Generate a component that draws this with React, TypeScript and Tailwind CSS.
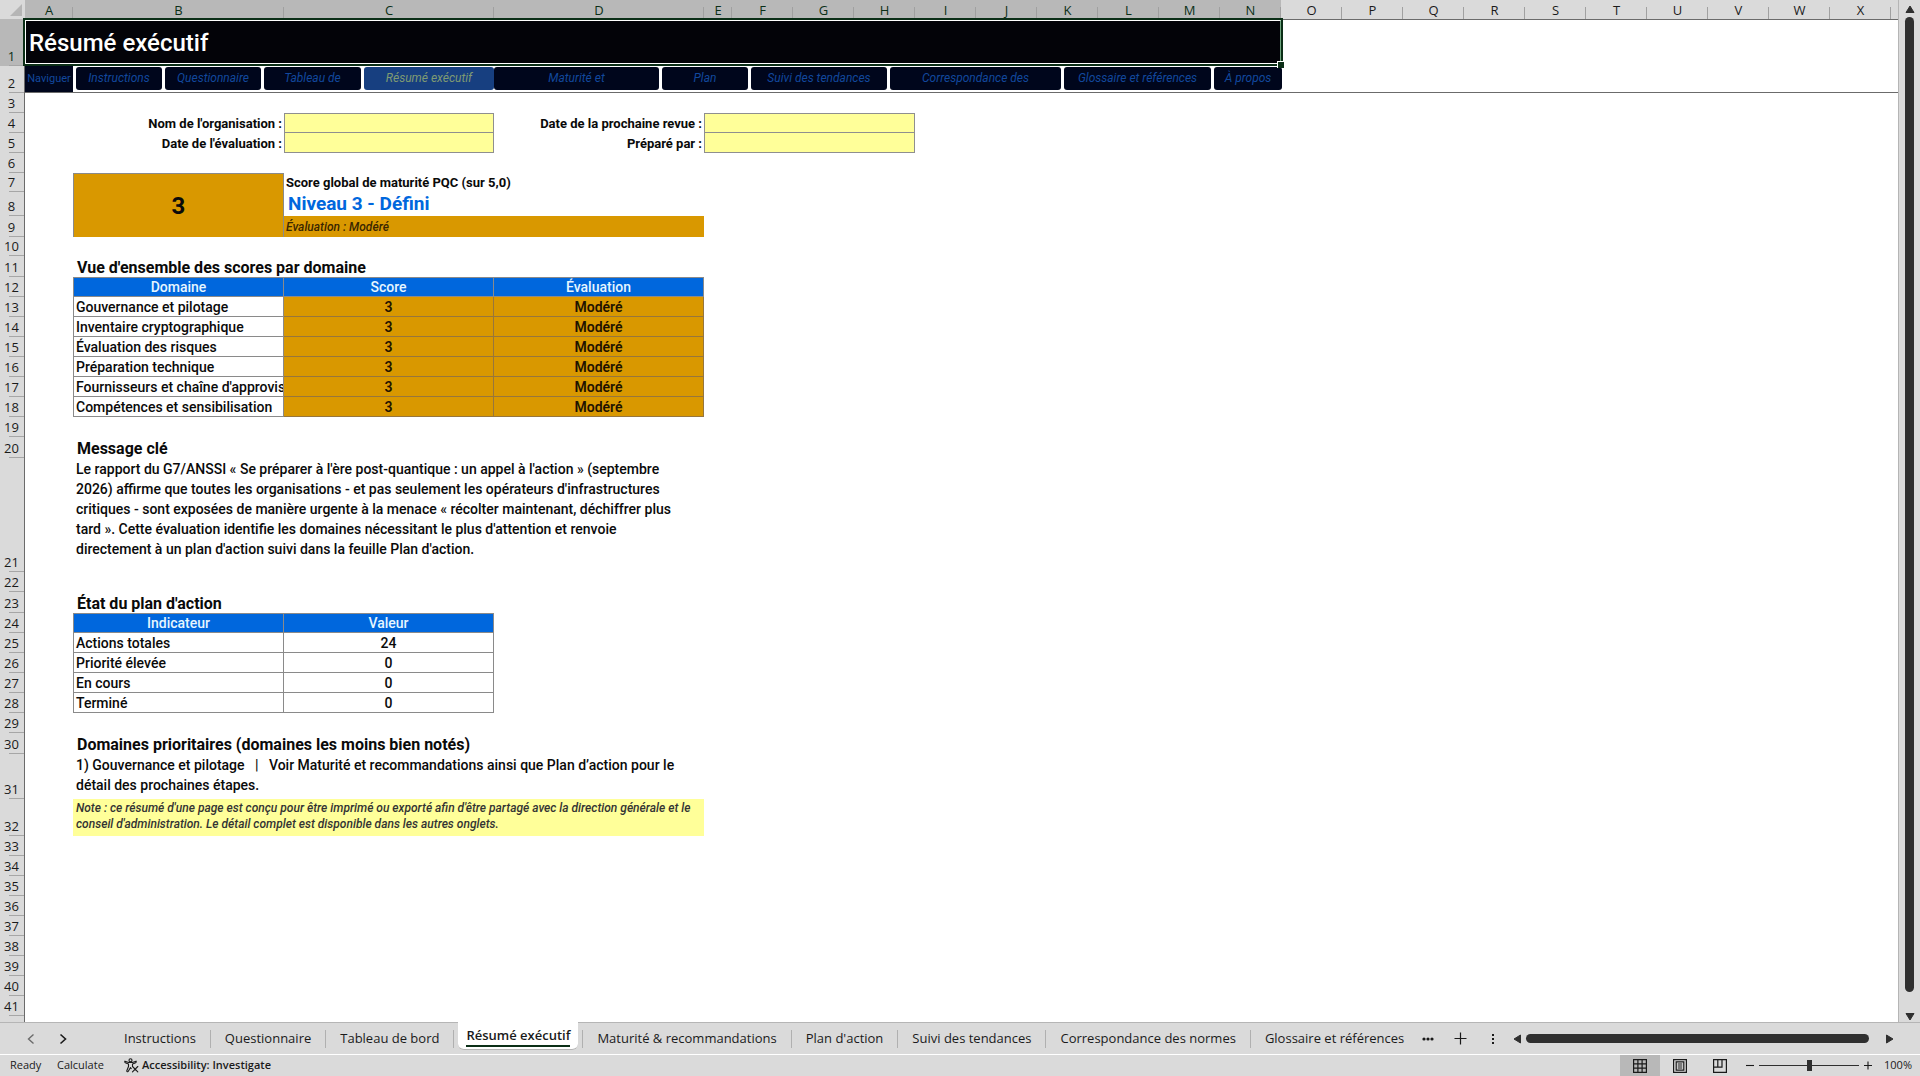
import type { ReactNode } from 'react'

const aptos = "font-['Roboto','Inter',sans-serif]"
const segoe = "font-['Open_Sans','Noto_Sans',sans-serif]"

const NARROW = 'FGHIJKLMNOPQRSTUVWX'.split('')
const LETTERS = ['A', 'B', 'C', 'D', 'E', ...NARROW]
const SELECTED = 'ABCDEFGHIJKLMN'

const NAV = [
  { label: 'Instructions', width: 'w-[86px]' },
  { label: 'Questionnaire', width: 'w-24' },
  { label: 'Tableau de', width: 'w-[97px]' },
  { label: 'Résumé exécutif', width: 'w-[130px]', active: true },
  { label: 'Maturité et', width: 'w-[165px]' },
  { label: 'Plan', width: 'w-[86px]' },
  { label: 'Suivi des tendances', width: 'w-[136px]' },
  { label: 'Correspondance des', width: 'w-[171px]' },
  { label: 'Glossaire et références', width: 'w-[147px]' },
  { label: 'À propos', width: 'w-[68px]' },
]

const DOMAINS = [
  'Gouvernance et pilotage',
  'Inventaire cryptographique',
  'Évaluation des risques',
  'Préparation technique',
  "Fournisseurs et chaîne d'approvisionnement",
  'Compétences et sensibilisation',
]

const INDICATORS = [
  { label: 'Actions totales', value: 24 },
  { label: 'Priorité élevée', value: 0 },
  { label: 'En cours', value: 0 },
  { label: 'Terminé', value: 0 },
]

const SHEETS = [
  'Instructions',
  'Questionnaire',
  'Tableau de bord',
  'Résumé exécutif',
  'Maturité & recommandations',
  "Plan d'action",
  'Suivi des tendances',
  'Correspondance des normes',
  'Glossaire et références',
]

function Row({ n, height = 'h-5', selected, children }: { n: number; height?: string; selected?: boolean; children?: ReactNode }) {
  return (
    <tr className={height}>
      <th
        scope="row"
        className={`relative border-r border-[#6b6b6b] p-0 pr-px pb-px text-center align-bottom font-normal ${segoe} text-[13px] leading-[18px] ${
          selected ? 'bg-[#b8b8b8] text-[#0b2f17]' : 'bg-[#dadada] text-[#1a1a1a]'
        }`}
      >
        {n}
        <span className="absolute right-0 bottom-0 h-px w-[15px] bg-[#a6a6a6]" />
      </th>
      {children ?? <td colSpan={25} />}
    </tr>
  )
}

function Field({ id, label, last, span }: { id: string; label: string; last?: boolean; span?: number }) {
  return (
    <>
      <td className="p-0 pt-0.5 pr-0.5 text-right text-[13px] leading-4 font-bold whitespace-nowrap">
        <label htmlFor={id}>{label}</label>
      </td>
      <td colSpan={span} className={`border-r border-b border-l border-[#8f8f8f] bg-[#ffff99] p-0 ${last ? '' : 'border-t'}`}>
        <input id={id} className="block h-[18px] w-full bg-transparent px-1 text-[13px] outline-none" />
      </td>
    </>
  )
}

function HeadCell({ children, first }: { children: ReactNode; first?: boolean }) {
  return (
    <th
      scope="col"
      className={`border-t border-r border-b border-[#8a8a8a] bg-[#0067dd] p-0 text-[14px] leading-[18px] font-medium text-[#e6f6ff] ${first ? 'border-l' : ''}`}
    >
      {children}
    </th>
  )
}

function SectionTitle({ n, children }: { n: number; children: ReactNode }) {
  return (
    <Row n={n} height="h-[21px]">
      <td />
      <td colSpan={24} className="p-0 pl-1 align-bottom">
        <h2 className="text-base leading-[19px] font-bold whitespace-nowrap">{children}</h2>
      </td>
    </Row>
  )
}

function Grid() {
  const body = 'text-[14px] leading-[18px] font-medium'
  const cell = `border-r border-b border-[#8a8a8a] p-0 pt-px ${body}`
  const amber = 'border-[#97763c] bg-[#d99800] text-center font-semibold text-[#1f1300]'
  return (
    <table className={`w-full table-fixed border-separate border-spacing-0 text-[#0a0a0a] ${aptos}`}>
      <colgroup>
        <col className="w-[25px]" />
        <col className="w-12" />
        <col className="w-[211px]" />
        <col className="w-[210px]" />
        <col className="w-[210px]" />
        <col className="w-7" />
        {NARROW.map((l) => (
          <col key={l} className="w-[61px]" />
        ))}
        <col />
      </colgroup>
      <thead>
        <tr className="h-5">
          <td className="border-b border-[#b8b8b8] bg-[#dadada] p-0">
            <svg className="mr-[3px] ml-auto block" width="12" height="12" viewBox="0 0 12 12">
              <path d="M12 0V12H0Z" fill="#b5b5b5" />
            </svg>
          </td>
          {LETTERS.map((l) => (
            <th
              key={l}
              scope="col"
              className={`relative border-b p-0 pt-px text-center font-normal ${segoe} text-[13px] leading-[18px] ${
                SELECTED.includes(l) ? 'border-[#0b2f17] bg-[#b8b8b8] text-[#0b2f17]' : 'border-[#6b6b6b] bg-[#dadada] text-[#1a1a1a]'
              }`}
            >
              {l}
              <span className="absolute right-0 bottom-0 h-3 w-px bg-[#a0a0a0]" />
            </th>
          ))}
          <td className="border-b border-[#6b6b6b] bg-[#dadada] p-0" />
        </tr>
      </thead>
      <tbody>
        <Row n={1} height="h-[46px]" selected>
          <td colSpan={14} className="relative bg-[#030308] p-0">
            <h1 className="pl-1 text-[24px] leading-8 font-medium text-white">Résumé exécutif</h1>
            {/* selection frame with its fill handle */}
            <span className="absolute -inset-x-0.5 -top-0.5 bottom-0 border-2 border-[#0b2f17]" />
            <span className="absolute inset-x-0 top-0 bottom-0.5 border border-white border-r-[#6fa57f]" />
            <span className="absolute -right-[3px] -bottom-0.5 size-[7px] border-t border-l border-white bg-[#0b2f17]" />
          </td>
          <td colSpan={11} />
        </Row>
        <Row n={2} height="h-[27px]">
          <td className="border-b border-[#6b6b6b] bg-[#00061c] p-0 text-center text-[11px] leading-4 text-[#12489c]">Naviguer</td>
          <td colSpan={24} className="border-b border-[#6b6b6b] p-0 align-top">
            <nav className="flex gap-[3px] pt-px pl-[3px]">
              {NAV.map((item) => (
                <a
                  key={item.label}
                  href="#"
                  className={`shrink-0 rounded-[3px] text-center text-[12px] leading-[23px] whitespace-nowrap italic ${item.width} ${
                    item.active ? '-mr-[3px] bg-[#173f80] text-[#7f9a73]' : 'bg-[#00061c] text-[#12489c]'
                  }`}
                >
                  {item.label}
                </a>
              ))}
            </nav>
          </td>
        </Row>
        <Row n={3} />
        <Row n={4}>
          <td />
          <Field id="org" label="Nom de l'organisation :" />
          <Field id="review" label="Date de la prochaine revue :" span={4} />
          <td colSpan={17} />
        </Row>
        <Row n={5}>
          <td />
          <Field id="date" label="Date de l'évaluation :" last />
          <Field id="author" label="Préparé par :" span={4} last />
          <td colSpan={17} />
        </Row>
        <Row n={6} />
        <Row n={7} height="h-[19px]">
          <td />
          <td rowSpan={3} className="border-t border-r border-l border-[#8a8a8a] bg-[#d99800] p-0 text-center text-[24px] leading-7 font-bold">
            3
          </td>
          <td colSpan={23} className="p-0 pl-0.5 text-[13px] leading-[18px] font-bold">
            Score global de maturité PQC (sur 5,0)
          </td>
        </Row>
        <Row n={8} height="h-6">
          <td />
          <td colSpan={23} className="p-0 pl-1 text-[19px] leading-[22px] font-bold text-[#0067dd]">
            Niveau 3 - Défini
          </td>
        </Row>
        <Row n={9} height="h-[21px]">
          <td />
          <td colSpan={2} className="bg-[#d99800] p-0 pt-px pl-0.5 text-[12px] leading-4 font-medium text-[#3a2600] italic">
            Évaluation : Modéré
          </td>
          <td colSpan={21} />
        </Row>
        <Row n={10} height="h-[19px]" />
        <SectionTitle n={11}>Vue d'ensemble des scores par domaine</SectionTitle>
        <Row n={12}>
          <td />
          <HeadCell first>Domaine</HeadCell>
          <HeadCell>Score</HeadCell>
          <HeadCell>Évaluation</HeadCell>
          <td colSpan={21} />
        </Row>
        {DOMAINS.map((domain, i) => (
          <Row key={domain} n={13 + i}>
            <td />
            <td className={`${cell} overflow-hidden border-l pl-0.5 whitespace-nowrap`}>{domain}</td>
            <td className={`${cell} ${amber}`}>3</td>
            <td className={`${cell} ${amber}`}>Modéré</td>
            <td colSpan={21} />
          </Row>
        ))}
        <Row n={19} />
        <SectionTitle n={20}>Message clé</SectionTitle>
        <Row n={21} height="h-[114px]">
          <td />
          <td colSpan={3} className="p-0 px-[3px] pt-px align-top text-[14px] leading-5 font-medium">
            Le rapport du G7/ANSSI « Se préparer à l'ère post-quantique : un appel à l'action » (septembre
            <br />
            2026) affirme que toutes les organisations - et pas seulement les opérateurs d'infrastructures
            <br />
            critiques - sont exposées de manière urgente à la menace « récolter maintenant, déchiffrer plus
            <br />
            tard ». Cette évaluation identifie les domaines nécessitant le plus d'attention et renvoie
            <br />
            directement à un plan d'action suivi dans la feuille Plan d'action.
          </td>
          <td colSpan={21} />
        </Row>
        <Row n={22} />
        <SectionTitle n={23}>État du plan d'action</SectionTitle>
        <Row n={24}>
          <td />
          <HeadCell first>Indicateur</HeadCell>
          <HeadCell>Valeur</HeadCell>
          <td colSpan={22} />
        </Row>
        {INDICATORS.map(({ label, value }, i) => (
          <Row key={label} n={25 + i}>
            <td />
            <td className={`${cell} border-l pl-0.5`}>{label}</td>
            <td className={`${cell} text-center`}>{value}</td>
            <td colSpan={22} />
          </Row>
        ))}
        <Row n={29} />
        <SectionTitle n={30}>Domaines prioritaires (domaines les moins bien notés)</SectionTitle>
        <Row n={31} height="h-[45px]">
          <td />
          <td colSpan={3} className="p-0 px-[3px] pt-px align-top text-[14px] leading-5 font-medium">
            1) Gouvernance et pilotage &nbsp;&nbsp;|&nbsp;&nbsp; Voir Maturité et recommandations ainsi que Plan d’action pour le
            <br />
            détail des prochaines étapes.
          </td>
          <td colSpan={21} />
        </Row>
        <Row n={32} height="h-[37px]">
          <td />
          <td colSpan={3} className="bg-[#ffff99] p-0 px-[3px] pt-px align-top text-[12px] leading-4 font-medium text-[#333] italic">
            Note : ce résumé d'une page est conçu pour être imprimé ou exporté afin d'être partagé avec la direction générale et le
            <br />
            conseil d'administration. Le détail complet est disponible dans les autres onglets.
          </td>
          <td colSpan={21} />
        </Row>
        {[33, 34, 35, 36, 37, 38, 39, 40, 41].map((n) => (
          <Row key={n} n={n} />
        ))}
        <tr className="h-5">
          <td className="border-r border-[#6b6b6b] bg-[#dadada]" />
          <td colSpan={25} />
        </tr>
      </tbody>
    </table>
  )
}

function Arrow({ d, label }: { d: string; label: string }) {
  return (
    <button type="button" aria-label={label} className="flex items-center justify-center">
      <svg width="10" height="10" viewBox="0 0 10 10">
        <path d={d} fill="#2f2f2f" stroke="#2f2f2f" strokeLinejoin="round" />
      </svg>
    </button>
  )
}

function SheetTabs() {
  return (
    <div className={`flex h-8 shrink-0 items-stretch border-t border-[#b5b5b5] bg-[#dadada] text-[13px] text-[#1a1a1a] ${segoe}`}>
      <div className="flex w-[110px] shrink-0 items-center gap-[22px] pl-[26px]">
        <button type="button" aria-label="Previous sheet">
          <svg width="10" height="12" viewBox="0 0 10 12" fill="none" stroke="#6b6b6b" strokeWidth="1.4">
            <path d="M7.5 1.5L2.5 6L7.5 10.5" />
          </svg>
        </button>
        <button type="button" aria-label="Next sheet">
          <svg width="10" height="12" viewBox="0 0 10 12" fill="none" stroke="#1a1a1a" strokeWidth="1.6">
            <path d="M2.5 1.5L7.5 6L2.5 10.5" />
          </svg>
        </button>
      </div>
      <div className="flex">
        {SHEETS.map((sheet, i) =>
          sheet === 'Résumé exécutif' ? (
            <button
              key={sheet}
              type="button"
              className="-mt-px mr-1 mb-1 ml-1 flex items-center rounded-b-md border-b border-[#b5b5b5] bg-white px-2 font-semibold whitespace-nowrap"
            >
              <span className="border-b-2 border-[#0b2f17] leading-5">{sheet}</span>
            </button>
          ) : (
            <span key={sheet} className="flex items-center">
              {i === 4 && <span className="h-[18px] w-px bg-[#b0b0b0]" />}
              <button type="button" className="px-3.5 whitespace-nowrap">
                {sheet}
              </button>
              {i < 8 && <span className="h-[18px] w-px bg-[#b0b0b0]" />}
            </span>
          ),
        )}
      </div>
      <div className="flex min-w-0 flex-1 items-center pr-[25px] pl-1">
        <button type="button" aria-label="More sheets">
          <svg width="12" height="4" viewBox="0 0 12 4" fill="#1a1a1a">
            <circle cx="2" cy="2" r="1.6" />
            <circle cx="6" cy="2" r="1.6" />
            <circle cx="10" cy="2" r="1.6" />
          </svg>
        </button>
        <button type="button" aria-label="New sheet" className="ml-5">
          <svg width="13" height="13" viewBox="0 0 13 13" stroke="#1a1a1a" strokeWidth="1.2">
            <path d="M6.5 0.5V12.5M0.5 6.5H12.5" />
          </svg>
        </button>
        <svg className="ml-6 shrink-0" width="4" height="12" viewBox="0 0 4 12" fill="#1a1a1a">
          <path d="M1 1h2v2H1zM1 5h2v2H1zM1 9h2v2H1z" />
        </svg>
        <div className="ml-[17px] flex flex-1 items-center">
          <Arrow label="Scroll left" d="M8.5 1V9L2 5Z" />
          <div className="mr-4 ml-1 h-[9px] flex-1 rounded-full bg-[#2f2f2f]" />
          <Arrow label="Scroll right" d="M1.5 1V9L8 5Z" />
        </div>
      </div>
    </div>
  )
}

function StatusBar() {
  return (
    <div className={`flex h-[22px] shrink-0 items-stretch border-t border-white bg-[#dadada] text-[11px] text-[#1a1a1a] ${segoe}`}>
      <div className="flex flex-1 items-center pl-2.5">
        <span className="w-[47px]">Ready</span>
        <span className="w-[67px]">Calculate</span>
        <button type="button" className="flex items-center gap-[3px] font-semibold">
          <svg width="15" height="15" viewBox="0 0 15 15" fill="none" stroke="#1a1a1a" strokeWidth="1.1" strokeLinejoin="round" strokeLinecap="round">
            <circle cx="6.5" cy="2.2" r="1.5" />
            <path d="M1 3.2C0.4 4 1 4.8 1.8 5L4.5 6V8.5L2.8 12.8C2.6 13.8 3.8 14.2 4.3 13.3L6.5 9.5L7.2 10.6M12 3.2C12.6 4 12 4.8 11.2 5L8.5 6V7.5M1 3.2L4.6 4.4H8.4L12 3.2M8.5 8.5L13.8 13.8M13.8 8.5L8.5 13.8" />
          </svg>
          Accessibility: Investigate
        </button>
      </div>
      <div className="flex items-stretch">
        <button type="button" aria-label="Normal view" className="flex w-10 items-center justify-center bg-[#b8b8b8]">
          <svg width="14" height="14" viewBox="0 0 14 14" fill="none" stroke="#1a1a1a" strokeWidth="1.2">
            <path d="M0.6 0.6H13.4V13.4H0.6ZM4.9 0.6V13.4M9.1 0.6V13.4M0.6 4.9H13.4M0.6 9.1H13.4" />
          </svg>
        </button>
        <button type="button" aria-label="Page layout view" className="flex w-10 items-center justify-center">
          <svg width="14" height="14" viewBox="0 0 14 14" fill="none" stroke="#1a1a1a" strokeWidth="1.2">
            <path d="M0.6 0.6H13.4V13.4H0.6ZM3.2 2.8H10.8V11.2H3.2ZM4.8 5H9.2M4.8 7H9.2M4.8 9H9.2" />
          </svg>
        </button>
        <button type="button" aria-label="Page break preview" className="flex w-10 items-center justify-center">
          <svg width="14" height="14" viewBox="0 0 14 14" fill="none" stroke="#1a1a1a" strokeWidth="1.2">
            <path d="M0.6 0.6H13.4V13.4H0.6ZM0.6 8.2H9V0.6M4.8 0.6V8.2" />
          </svg>
        </button>
      </div>
      <div className="flex items-center gap-1 pl-[5px]">
        <button type="button" aria-label="Zoom out">
          <svg width="10" height="10" viewBox="0 0 10 10" stroke="#1a1a1a" strokeWidth="1.1">
            <path d="M1 4.5H9" />
          </svg>
        </button>
        <input
          type="range"
          aria-label="Zoom"
          defaultValue={50}
          className="h-3 w-[100px] appearance-none bg-[linear-gradient(#2f2f2f,#2f2f2f)] bg-[length:100%_1px] bg-center bg-no-repeat [&::-webkit-slider-thumb]:h-[11px] [&::-webkit-slider-thumb]:w-[5px] [&::-webkit-slider-thumb]:appearance-none [&::-webkit-slider-thumb]:bg-[#2f2f2f]"
        />
        <button type="button" aria-label="Zoom in">
          <svg width="10" height="10" viewBox="0 0 10 10" stroke="#1a1a1a" strokeWidth="1.1">
            <path d="M1 4.5H9M5 0.5V8.5" />
          </svg>
        </button>
        <button type="button" className="w-[43px] pr-2 text-right">
          100%
        </button>
      </div>
    </div>
  )
}

export default function App() {
  return (
    <div className="flex h-screen flex-col overflow-hidden bg-white">
      <div className="flex min-h-0 flex-1">
        <main className="min-w-0 flex-1 overflow-hidden">
          <Grid />
        </main>
        <div className="flex w-[22px] shrink-0 flex-col items-center border-l border-[#b5b5b5] bg-[#dadada] pt-1">
          <Arrow label="Scroll up" d="M1 8.5H9L5 2Z" />
          <div className="mt-[3px] mb-5 w-[9px] flex-1 rounded-full bg-[#2f2f2f]" />
          <Arrow label="Scroll down" d="M1 1.5H9L5 8Z" />
        </div>
      </div>
      <SheetTabs />
      <StatusBar />
    </div>
  )
}
